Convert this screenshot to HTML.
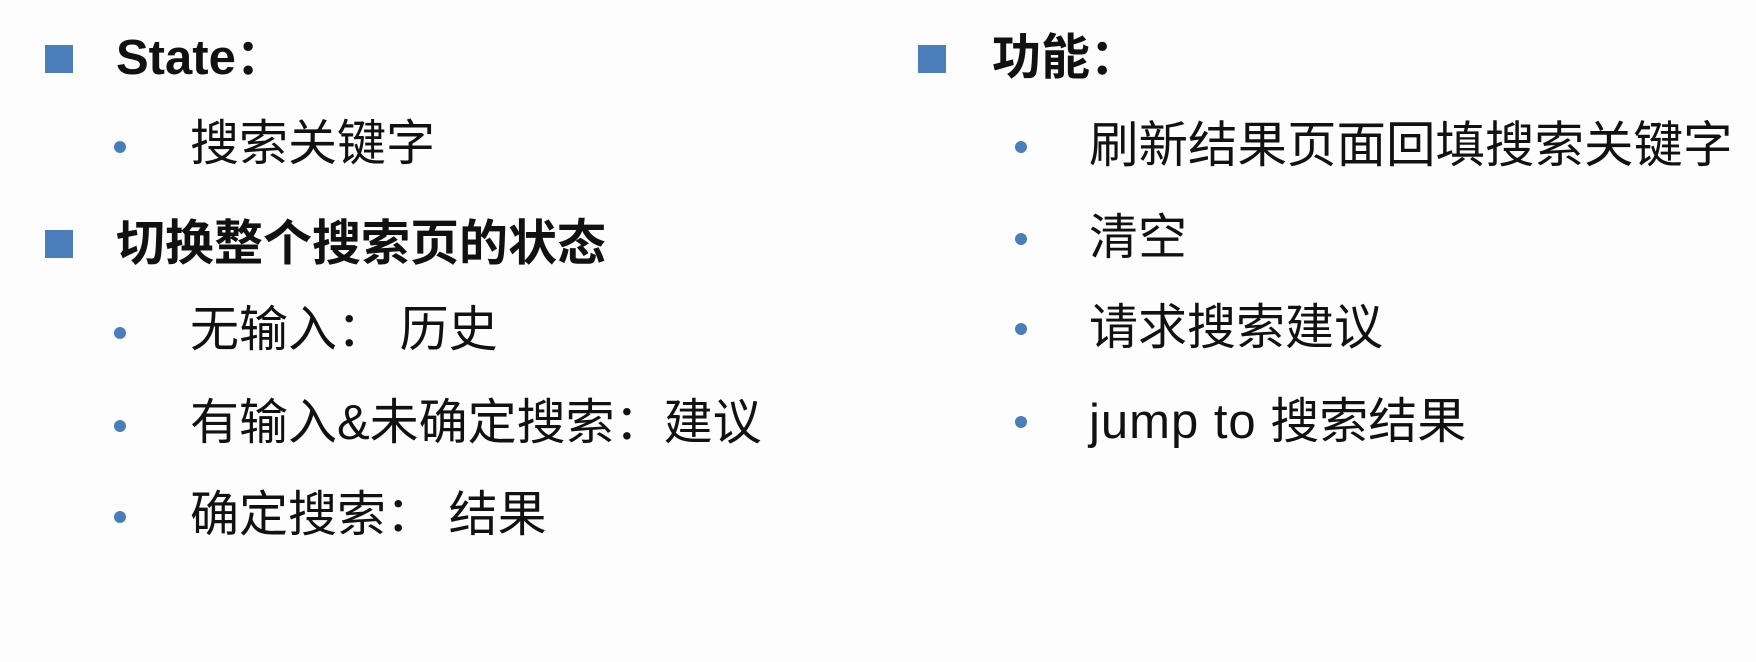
<!DOCTYPE html>
<html><head><meta charset="utf-8"><style>
body{margin:0;width:1756px;height:662px;background:#fdfdfd;position:relative;overflow:hidden;font-family:"Liberation Sans","Noto Sans CJK SC",sans-serif;color:#111}
.t{position:absolute;white-space:nowrap;line-height:1}
.h{font-weight:bold;font-size:49px}
.i{font-size:49px}
.sq{position:absolute;width:28px;height:28px;background:#4a7ebb}
.b{position:absolute;width:12px;height:12px;border-radius:50%;background:#4a7ebb}
</style></head><body>
<div class="sq" style="left:45px;top:45px"></div>
<div class="t h" style="left:116px;top:34px">State：</div>
<div class="b" style="left:114px;top:141px"></div>
<div class="t i" style="left:190px;top:120px">搜索关键字</div>

<div class="sq" style="left:45px;top:230px"></div>
<div class="t h" style="left:116px;top:220px">切换整个搜索页的状态</div>
<div class="b" style="left:114px;top:327px"></div>
<div class="t i" style="left:190px;top:306px">无输入： 历史</div>
<div class="b" style="left:114px;top:420px"></div>
<div class="t i" style="left:190px;top:399px">有输入&amp;未确定搜索：建议</div>
<div class="b" style="left:114px;top:511px"></div>
<div class="t i" style="left:190px;top:491px">确定搜索： 结果</div>

<div class="sq" style="left:918px;top:45px"></div>
<div class="t h" style="left:992px;top:34px">功能：</div>
<div class="b" style="left:1015px;top:141px"></div>
<div class="t i" style="left:1089px;top:121px;font-size:49.5px">刷新结果页面回填搜索关键字</div>
<div class="b" style="left:1015px;top:233px"></div>
<div class="t i" style="left:1089px;top:214px">清空</div>
<div class="b" style="left:1015px;top:323px"></div>
<div class="t i" style="left:1089px;top:304px">请求搜索建议</div>
<div class="b" style="left:1015px;top:416px"></div>
<div class="t i" style="left:1089px;top:398px"><span style="letter-spacing:1px">jump to</span> 搜索结果</div>
</body></html>
